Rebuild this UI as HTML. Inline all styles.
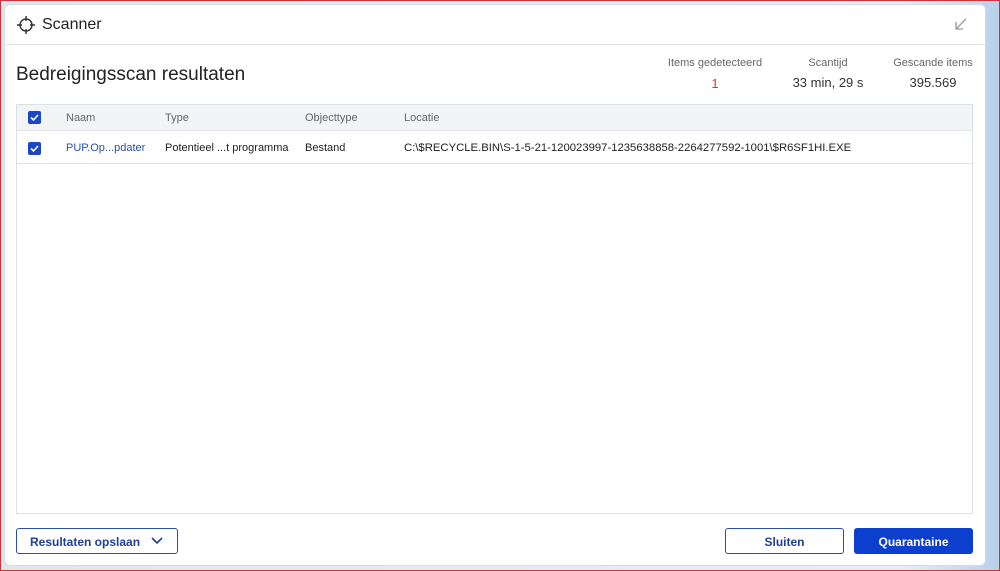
<!DOCTYPE html>
<html><head><meta charset="utf-8"><style>
*{margin:0;padding:0;box-sizing:border-box}
body{width:1000px;height:571px;overflow:hidden;font-family:"Liberation Sans",sans-serif;background:linear-gradient(90deg,#dfe6ee 0%,#e8eef5 90%,#b8d0ea 100%);position:relative;border:1px solid #d0313a}
.win{position:absolute;left:3px;top:3px;width:982px;height:562px;background:#fff;border-radius:6px;border:1px solid #d6dbe2}
.abs{position:absolute}
.h{font-size:11px;color:#666}
</style></head><body>
<div class="win">
<svg class="abs" style="left:11px;top:10px" width="20" height="20" viewBox="0 0 20 20" fill="none" stroke="#333" stroke-width="1.4"><circle cx="10" cy="10" r="6"/><path d="M10 1v5M10 14v5M1 10h5M14 10h5"/></svg>
<div class="abs" style="left:37px;top:11px;font-size:16px;color:#222">Scanner</div>
<svg class="abs" style="left:949px;top:12px" width="14" height="14" viewBox="0 0 14 14" fill="none" stroke="#999" stroke-width="1.3"><path d="M12 2L2 12M2 5v7h7"/></svg>
<div class="abs" style="left:0;top:39px;width:980px;height:1px;background:#e2e5ea"></div>
<div class="abs" style="left:11px;top:59px;font-size:19px;color:#222">Bedreigingsscan resultaten</div>
<div class="abs h" style="left:658px;top:52px;width:104px;text-align:center">Items gedetecteerd</div>
<div class="abs" style="left:658px;top:71px;width:104px;text-align:center;font-size:13px;color:#d33">1</div>
<div class="abs h" style="left:778px;top:52px;width:90px;text-align:center">Scantijd</div>
<div class="abs" style="left:778px;top:70px;width:90px;text-align:center;font-size:13px;color:#333">33 min, 29 s</div>
<div class="abs h" style="left:883px;top:52px;width:90px;text-align:center">Gescande items</div>
<div class="abs" style="left:883px;top:70px;width:90px;text-align:center;font-size:13px;color:#333">395.569</div>
<div class="abs" style="left:11px;top:99px;width:957px;height:410px;border:1px solid #dde1e6">
 <div class="abs" style="left:0;top:0;width:955px;height:26px;background:#f2f4f6;border-bottom:1px solid #e2e5ea"></div>
 <div class="abs" style="left:0;top:26px;width:955px;height:33px;border-bottom:1px solid #e2e5ea"></div>
 <div class="abs" style="left:11px;top:6px;width:13px;height:13px;background:#1a47c4;border-radius:2px"><svg width="13" height="13" viewBox="0 0 13 13" fill="none" stroke="#fff" stroke-width="1.6"><path d="M3 6.5l2.5 2.5L10 4"/></svg></div>
 <div class="abs" style="left:11px;top:37px;width:13px;height:13px;background:#1a47c4;border-radius:2px"><svg width="13" height="13" viewBox="0 0 13 13" fill="none" stroke="#fff" stroke-width="1.6"><path d="M3 6.5l2.5 2.5L10 4"/></svg></div>
 <div class="abs h" style="left:49px;top:7px">Naam</div>
 <div class="abs h" style="left:148px;top:7px">Type</div>
 <div class="abs h" style="left:288px;top:7px">Objecttype</div>
 <div class="abs h" style="left:387px;top:7px">Locatie</div>
 <div class="abs" style="left:49px;top:37px;font-size:11px;color:#2a4fb0">PUP.Op...pdater</div>
 <div class="abs" style="left:148px;top:37px;font-size:11px;color:#222">Potentieel ...t programma</div>
 <div class="abs" style="left:288px;top:37px;font-size:11px;color:#222">Bestand</div>
 <div class="abs" style="left:387px;top:37px;font-size:11.3px;color:#222">C:\$RECYCLE.BIN\S-1-5-21-120023997-1235638858-2264277592-1001\$R6SF1HI.EXE</div>
</div>
<div class="abs" style="left:11px;top:523px;width:162px;height:26px;border:1px solid #2a4fb0;border-radius:3px;font-size:12px;color:#1f3f9a;font-weight:bold;padding:6px 0 0 13px">Resultaten opslaan<svg style="position:absolute;left:134px;top:8px" width="12" height="8" viewBox="0 0 12 8" fill="none" stroke="#1f3f9a" stroke-width="1.6"><path d="M1 1l5 5 5-5"/></svg></div>
<div class="abs" style="left:720px;top:523px;width:119px;height:26px;border:1px solid #2a4fb0;border-radius:3px;font-size:12px;color:#1f3f9a;font-weight:bold;text-align:center;padding-top:6px">Sluiten</div>
<div class="abs" style="left:849px;top:523px;width:119px;height:26px;background:#0d3fcf;border-radius:3px;font-size:12px;color:#fff;font-weight:bold;text-align:center;padding-top:7px">Quarantaine</div>
</div>
</body></html>
